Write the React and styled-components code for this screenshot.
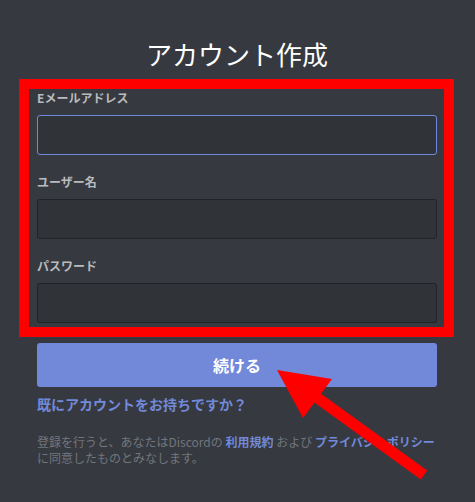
import React from 'react'
import styled, { createGlobalStyle } from 'styled-components'

const GlobalStyle = createGlobalStyle`
    html, body {
        margin: 0;
        padding: 0;
        background: #36393f;
    }
    body {
        font-family: "Noto Sans CJK JP", "Noto Sans", sans-serif;
    }
`

const Page = styled.div`
    position: relative;
    width: 475px;
    height: 502px;
    overflow: hidden;
    background: #36393f;
    padding-top: 39px;
    box-sizing: border-box;
`

const Column = styled.div`
    width: 400px;
    margin-left: 37px;
    display: flex;
    flex-direction: column;
`

const Title = styled.h1`
    margin: 0 0 10px;
    font-size: 26px;
    line-height: 30px;
    font-weight: 400;
    color: #ffffff;
    text-align: center;
`

const Highlight = styled.div`
    margin: 0 -17px 6px -18px;
    border: 10px solid #ff0000;
    padding: 0 7px 4px 8px;
    display: flex;
    flex-direction: column;
    gap: 18px;
`

const Field = styled.div`
    display: flex;
    flex-direction: column;
`

const Label = styled.label`
    font-size: 12px;
    line-height: 18px;
    font-weight: 700;
    color: #b9bbbe;
    margin-bottom: 8px;
`

const Input = styled.input`
    height: 40px;
    box-sizing: border-box;
    border-radius: 3px;
    border: 1px solid ${p => (p.$focused ? '#7289da' : 'rgba(0, 0, 0, 0.3)')};
    background: rgba(0, 0, 0, 0.1);
    color: #dcddde;
    padding: 10px;
    font-size: 16px;
    outline: none;
`

const Button = styled.button`
    height: 44px;
    border: none;
    border-radius: 3px;
    background: #7289da;
    color: #ffffff;
    font-family: inherit;
    font-size: 16px;
    font-weight: 700;
    cursor: pointer;
`

const LoginLink = styled.a`
    margin-top: 8px;
    font-size: 14px;
    line-height: 18px;
    font-weight: 700;
    color: #7289da;
    text-decoration: none;
`

const Terms = styled.p`
    margin: 21px 0 0;
    font-size: 12px;
    line-height: 16px;
    color: #72767d;
    white-space: nowrap;
`

const TermsLink = styled.a`
    color: #7289da;
    font-weight: 700;
    text-decoration: none;
`

const Overlay = styled.svg`
    position: absolute;
    left: 0;
    top: 0;
    pointer-events: none;
`

function Arrow() {
    return (
        <Overlay width="475" height="502" viewBox="0 0 475 502">
            <line x1="312" y1="394" x2="424" y2="475" stroke="#ff0000" strokeWidth="11" />
            <polygon points="277,370 332,379 303,418" fill="#ff0000" />
        </Overlay>
    )
}

export default function App() {
    return (
        <Page>
            <GlobalStyle />
            <Column>
                <Title>アカウント作成</Title>
                <Highlight>
                    <Field>
                        <Label>Eメールアドレス</Label>
                        <Input type="email" $focused />
                    </Field>
                    <Field>
                        <Label>ユーザー名</Label>
                        <Input type="text" />
                    </Field>
                    <Field>
                        <Label>パスワード</Label>
                        <Input type="password" />
                    </Field>
                </Highlight>
                <Button>続ける</Button>
                <LoginLink href="#">既にアカウントをお持ちですか？</LoginLink>
                <Terms>
                    登録を行うと、あなたはDiscordの <TermsLink href="#">利用規約</TermsLink> および{' '}
                    <TermsLink href="#">プライバシーポリシー</TermsLink>
                    <br />
                    に同意したものとみなします。
                </Terms>
            </Column>
            <Arrow />
        </Page>
    )
}
